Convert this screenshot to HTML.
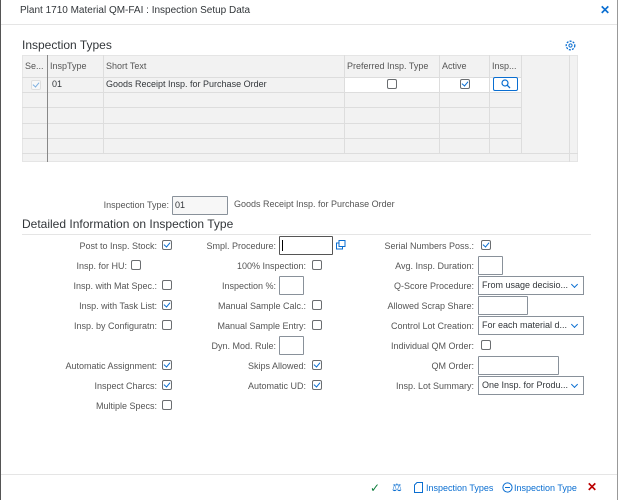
<!DOCTYPE html>
<html><head><style>
*{box-sizing:border-box;margin:0;padding:0}
body{width:620px;height:500px;background:#fff;font-family:"Liberation Sans",sans-serif;color:#32363a;position:relative;overflow:hidden;font-size:9px}
.a{position:absolute;white-space:nowrap}
.lbl{position:absolute;text-align:right;color:#555;font-size:9px;line-height:12px}
.cb{position:absolute;width:10px;height:10px;border:1px solid #6a6d70;border-radius:2px;background:#fff}
.cb.c::after{content:"";position:absolute;left:2px;top:0px;width:3px;height:5px;border:solid #0a6ed1;border-width:0 1px 1px 0;transform:rotate(40deg)}
.in{position:absolute;height:19px;border:1px solid #89919a;background:#fff;border-radius:1px}
.sel{position:absolute;height:19px;border:1px solid #89919a;background:#fff;font-size:9px;line-height:17px;padding-left:3px}
.sel::after{content:"";position:absolute;right:6px;top:5px;width:4px;height:4px;border:solid #0a6ed1;border-width:0 1px 1px 0;transform:rotate(45deg)}
.hl{position:absolute;height:1px;background:#ddd}
.vl{position:absolute;width:1px;background:#ddd}
</style></head><body>
<div style="position:absolute;left:0;top:0;width:1px;height:500px;background:#555"></div>
<div style="position:absolute;right:2px;top:0;width:1px;height:500px;background:#999"></div>
<div class="a" style="left:20px;top:5px;font-size:10px">Plant 1710 Material QM-FAI : Inspection Setup Data</div>
<div class="a" style="left:600px;top:3px;font-size:12px;color:#0a6ed1;font-weight:bold">✕</div>
<div class="hl" style="left:1px;top:24px;width:616px;background:#e5e5e5"></div>
<div class="a" style="left:22px;top:38px;font-size:12px">Inspection Types</div>
<svg class="a" style="left:565px;top:40px" width="11" height="11" viewBox="0 0 11 11"><circle cx="5.5" cy="5.5" r="4.3" fill="none" stroke="#0a6ed1" stroke-width="1.3" stroke-dasharray="2 1.2"/><circle cx="5.5" cy="5.5" r="1.6" fill="none" stroke="#0a6ed1"/></svg>
<div style="position:absolute;left:22px;top:55px;width:556px;height:107px;background:#f2f2f2;border:1px solid #e5e5e5"></div>
<div style="position:absolute;left:344px;top:77px;width:177px;height:15px;background:#fff"></div>
<div class="hl" style="left:22px;top:77px;width:499px"></div>
<div class="hl" style="left:22px;top:92px;width:499px"></div>
<div class="hl" style="left:22px;top:107px;width:499px"></div>
<div class="hl" style="left:22px;top:123px;width:499px"></div>
<div class="hl" style="left:22px;top:138px;width:499px"></div>
<div class="hl" style="left:22px;top:153px;width:556px"></div>
<div class="vl" style="left:47px;top:55px;height:107px;background:#888"></div>
<div class="vl" style="left:103px;top:55px;height:98px"></div>
<div class="vl" style="left:344px;top:55px;height:98px"></div>
<div class="vl" style="left:439px;top:55px;height:98px"></div>
<div class="vl" style="left:489px;top:55px;height:98px"></div>
<div class="vl" style="left:521px;top:55px;height:98px"></div>
<div class="vl" style="left:569px;top:55px;height:107px"></div>
<div class="a" style="left:25px;top:61px;color:#555">Se...</div>
<div class="a" style="left:50px;top:61px;color:#555">InspType</div>
<div class="a" style="left:106px;top:61px;color:#555">Short Text</div>
<div class="a" style="left:347px;top:61px;color:#555">Preferred Insp. Type</div>
<div class="a" style="left:442px;top:61px;color:#555">Active</div>
<div class="a" style="left:492px;top:61px;color:#555">Insp...</div>
<div class="cb c" style="left:31px;top:80px;border-color:#ccc;opacity:.5"></div>
<div class="a" style="left:52px;top:79px">01</div>
<div class="a" style="left:106px;top:79px">Goods Receipt Insp. for Purchase Order</div>
<div class="cb" style="left:387px;top:79px"></div>
<div class="cb c" style="left:460px;top:79px"></div>
<div style="position:absolute;left:493px;top:77px;width:25px;height:14px;border:1px solid #0a6ed1;border-radius:2px;background:#fff"></div>
<svg class="a" style="left:501px;top:79px" width="10" height="10"><circle cx="4" cy="4" r="3" fill="none" stroke="#0a6ed1" stroke-width="1.2"/><line x1="6" y1="6" x2="9" y2="9" stroke="#0a6ed1" stroke-width="1.3"/></svg>
<div class="lbl" style="left:60px;width:109px;top:199px">Inspection Type:</div>
<div class="in" style="left:172px;top:196px;width:56px;background:#f7f7f7;padding:3px 2px">01</div>
<div class="a" style="left:234px;top:199px;color:#555">Goods Receipt Insp. for Purchase Order</div>
<div class="a" style="left:22px;top:217px;font-size:12px">Detailed Information on Inspection Type</div>
<div class="hl" style="left:22px;top:234px;width:569px;background:#e5e5e5"></div>

<div class="lbl" style="left:20px;width:137px;top:240px">Post to Insp. Stock:</div><div class="cb c" style="left:162px;top:240px"></div>
<div class="lbl" style="left:20px;width:107px;top:260px">Insp. for HU:</div><div class="cb" style="left:131px;top:260px"></div>
<div class="lbl" style="left:20px;width:137px;top:280px">Insp. with Mat Spec.:</div><div class="cb" style="left:162px;top:280px"></div>
<div class="lbl" style="left:20px;width:137px;top:300px">Insp. with Task List:</div><div class="cb c" style="left:162px;top:300px"></div>
<div class="lbl" style="left:20px;width:137px;top:320px">Insp. by Configuratn:</div><div class="cb" style="left:162px;top:320px"></div>
<div class="lbl" style="left:20px;width:137px;top:360px">Automatic Assignment:</div><div class="cb c" style="left:162px;top:360px"></div>
<div class="lbl" style="left:20px;width:137px;top:380px">Inspect Charcs:</div><div class="cb c" style="left:162px;top:380px"></div>
<div class="lbl" style="left:20px;width:137px;top:400px">Multiple Specs:</div><div class="cb" style="left:162px;top:400px"></div>

<div class="lbl" style="left:176px;width:100px;top:240px">Smpl. Procedure:</div><div class="in" style="left:279px;top:236px;width:54px;border-color:#555"><div style="position:absolute;left:2px;top:3px;width:1px;height:11px;background:#000"></div></div>
<svg class="a" style="left:336px;top:240px" width="10" height="10"><rect x="0.5" y="3" width="6" height="6" fill="none" stroke="#0a6ed1"/><rect x="3" y="0.5" width="6" height="6" fill="#fff" stroke="#0a6ed1"/></svg>
<div class="lbl" style="left:180px;width:126px;top:260px">100% Inspection:</div><div class="cb" style="left:312px;top:260px"></div>
<div class="lbl" style="left:176px;width:100px;top:280px">Inspection %:</div><div class="in" style="left:279px;top:276px;width:25px"></div>
<div class="lbl" style="left:180px;width:126px;top:300px">Manual Sample Calc.:</div><div class="cb" style="left:312px;top:300px"></div>
<div class="lbl" style="left:180px;width:126px;top:320px">Manual Sample Entry:</div><div class="cb" style="left:312px;top:320px"></div>
<div class="lbl" style="left:176px;width:100px;top:340px">Dyn. Mod. Rule:</div><div class="in" style="left:279px;top:336px;width:25px"></div>
<div class="lbl" style="left:180px;width:126px;top:360px">Skips Allowed:</div><div class="cb c" style="left:312px;top:360px"></div>
<div class="lbl" style="left:180px;width:126px;top:380px">Automatic UD:</div><div class="cb c" style="left:312px;top:380px"></div>

<div class="lbl" style="left:350px;width:124px;top:240px">Serial Numbers Poss.:</div><div class="cb c" style="left:481px;top:240px"></div>
<div class="lbl" style="left:350px;width:124px;top:260px">Avg. Insp. Duration:</div><div class="in" style="left:478px;top:256px;width:25px"></div>
<div class="lbl" style="left:350px;width:124px;top:280px">Q-Score Procedure:</div><div class="sel" style="left:478px;top:276px;width:106px">From usage decisio...</div>
<div class="lbl" style="left:350px;width:124px;top:300px">Allowed Scrap Share:</div><div class="in" style="left:478px;top:296px;width:50px"></div>
<div class="lbl" style="left:350px;width:124px;top:320px">Control Lot Creation:</div><div class="sel" style="left:478px;top:316px;width:106px">For each material d...</div>
<div class="lbl" style="left:350px;width:124px;top:340px">Individual QM Order:</div><div class="cb" style="left:481px;top:340px"></div>
<div class="lbl" style="left:350px;width:124px;top:360px">QM Order:</div><div class="in" style="left:478px;top:356px;width:81px"></div>
<div class="lbl" style="left:350px;width:124px;top:380px">Insp. Lot Summary:</div><div class="sel" style="left:478px;top:376px;width:106px">One Insp. for Produ...</div>

<div class="hl" style="left:1px;top:474px;width:616px;background:#e5e5e5"></div>
<div class="a" style="left:370px;top:481px;color:#107e3e;font-size:12px">✓</div>
<div class="a" style="left:392px;top:481px;color:#0a6ed1;font-size:11px">⚖</div>
<svg class="a" style="left:414px;top:482px" width="9" height="11"><path d="M3 0.5H8.5V10.5H0.5V3Z" fill="none" stroke="#0a6ed1"/></svg>
<div class="a" style="left:426px;top:483px;color:#0a6ed1">Inspection Types</div>
<svg class="a" style="left:502px;top:482px" width="11" height="11"><circle cx="5.5" cy="5.5" r="4.6" fill="none" stroke="#0a6ed1"/><line x1="3" y1="5.5" x2="8" y2="5.5" stroke="#0a6ed1"/></svg>
<div class="a" style="left:514px;top:483px;color:#0a6ed1">Inspection Type</div>
<div class="a" style="left:587px;top:480px;color:#bb0000;font-size:12px;font-weight:bold">✕</div>
</body></html>
